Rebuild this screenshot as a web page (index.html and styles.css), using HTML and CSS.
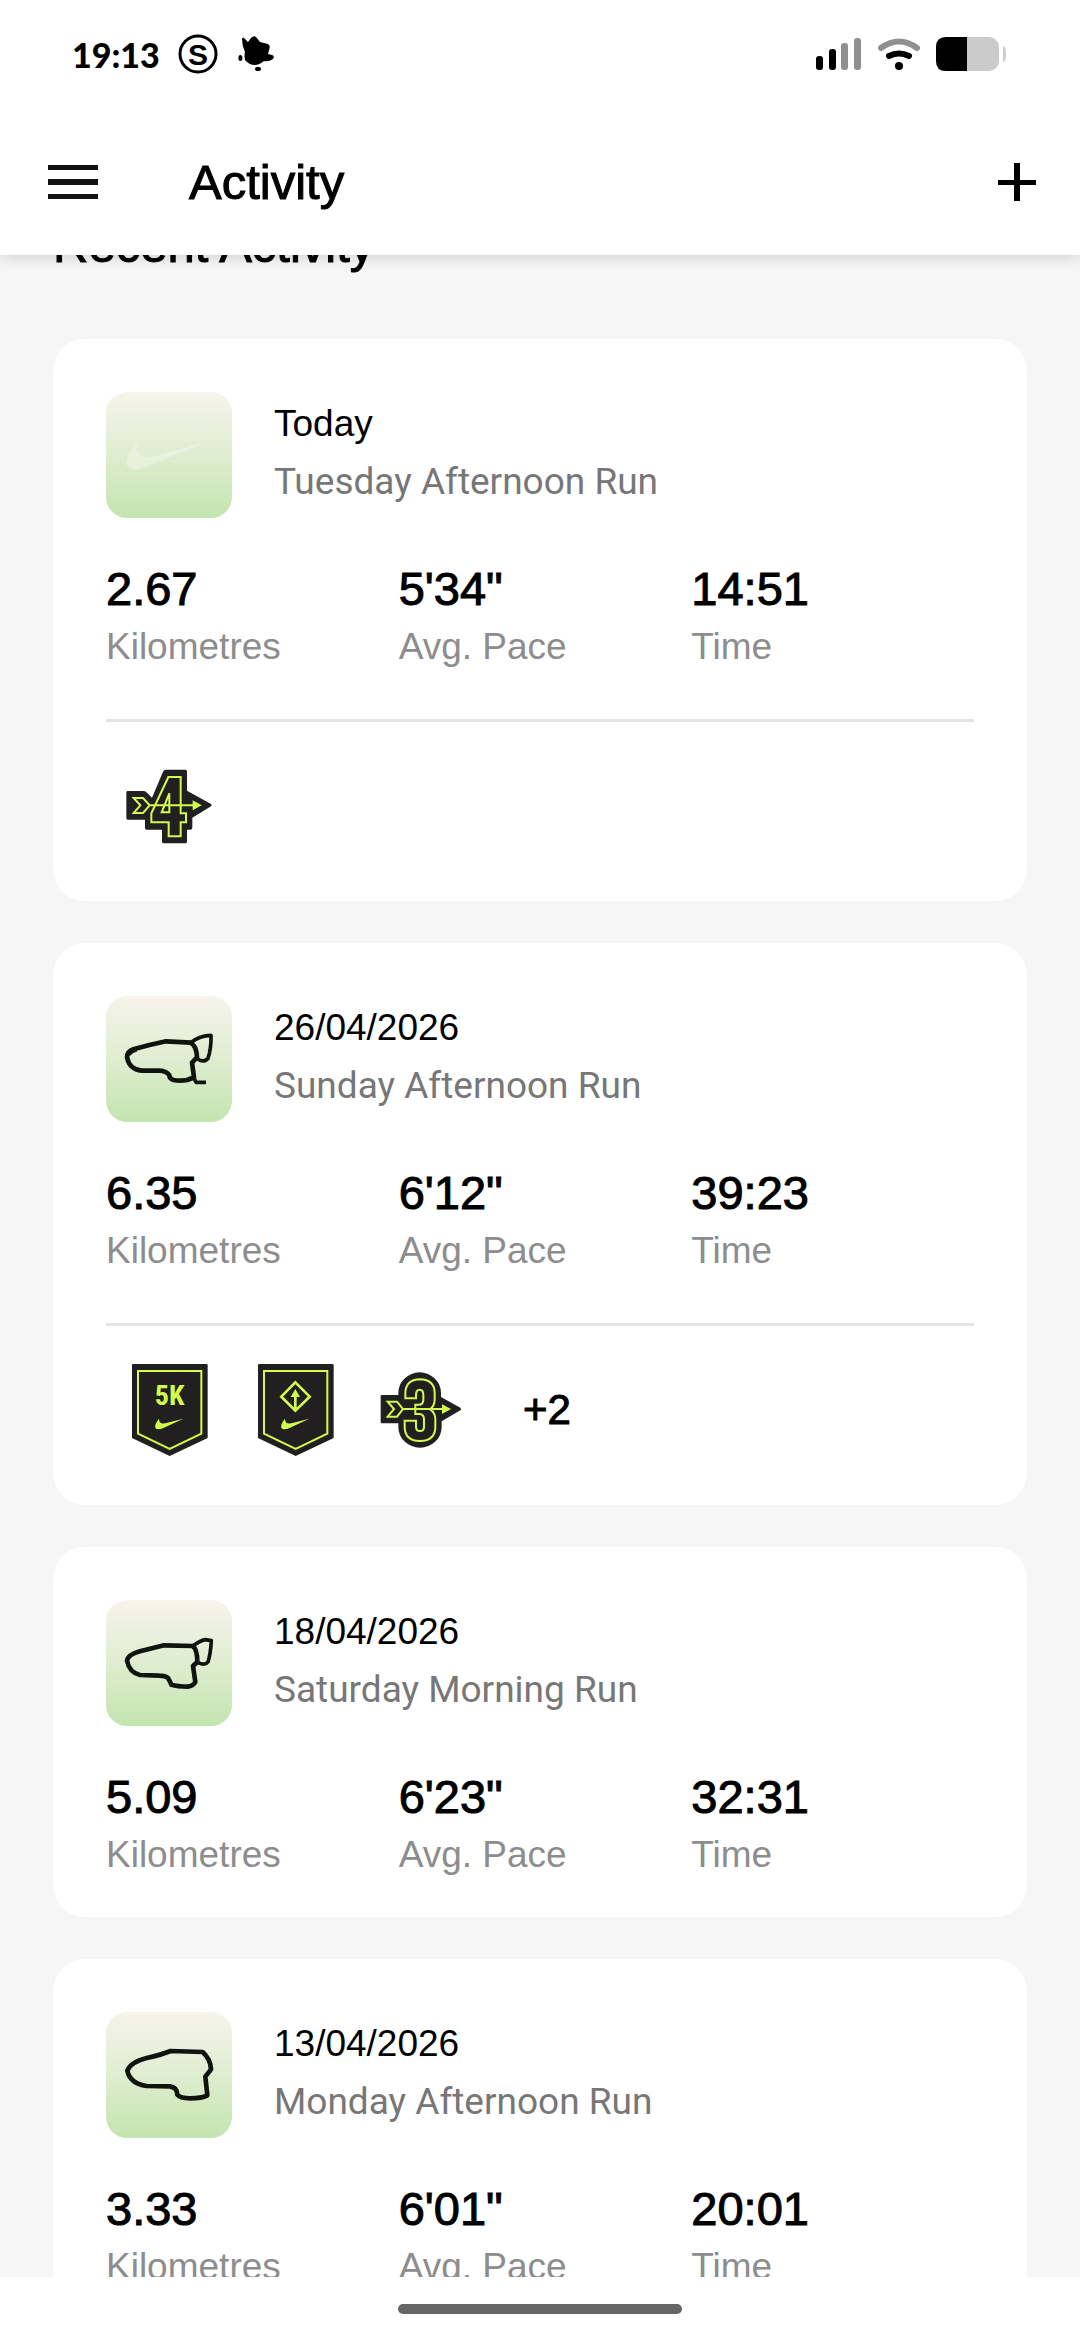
FILE: index.html
```html
<!DOCTYPE html>
<html lang="en">
  <head>
    <meta charset="UTF-8" />
    <meta name="viewport" content="width=device-width, initial-scale=1.0" />
    <title>Activity</title>
    <link rel="stylesheet" href="styles.css">
  </head>
  <body>
    <header class="header">
      <div class="status">
        <span class="clock">19:13</span>
        <svg class="status-s" viewBox="0 0 40 40">
          <circle cx="20" cy="20" r="18" fill="none" stroke="#000" stroke-width="3" />
          <text x="20" y="31" text-anchor="middle" class="s-letter">S</text>
        </svg>
        <svg class="splat" viewBox="0 0 36 36">
          <path d="M4 3q1-3 3 0l3 3 3-4q3-3 5-1l4 5 8 2q3 2 1 6l-1 4 4 1q3 1 1 4-4 3-9 2-5 4-9 4-6 0-10-5-1-5 0-8-3-6-3-13z" />
          <ellipse cx="2.4" cy="22" rx="2" ry="3" />
          <rect x="17" y="31" width="6" height="4" rx="2" />
        </svg>
        <div class="status-right">
          <svg width="46" height="34" viewBox="0 0 46 34">
            <rect x="0" y="19" width="7" height="14" rx="3" />
            <rect x="13" y="12" width="7" height="21" rx="3" />
            <rect x="25" y="6" width="7" height="27" rx="3" fill="#909090" />
            <rect x="38" y="1" width="7" height="32" rx="3" fill="#909090" />
          </svg>
          <svg width="44" height="34" viewBox="0 0 44 34" fill="none" stroke-linecap="round">
            <path d="M4 11Q22-2 40 11" stroke="#909090" stroke-width="6" />
            <path d="M12 19q10-5 20 0" stroke="#000" stroke-width="6" />
            <circle cx="22" cy="29" r="4" fill="#000" />
          </svg>
          <svg width="70" height="34" viewBox="0 0 70 34">
            <rect width="63" height="34" rx="10" fill="#cbcbcb" />
            <path d="M31 0H10Q0 0 0 10v14q0 10 10 10h21z" />
            <path d="M67 9q3 1 3 8t-3 8z" fill="#cbcbcb" />
          </svg>
        </div>
      </div>
      <div class="appbar">
        <button class="icon-button" aria-label="Menu">
          <svg width="50" height="34" viewBox="0 0 50 34" fill="#111">
            <rect width="50" height="5" />
            <rect y="14" width="50" height="6" />
            <rect y="29" width="50" height="5" />
          </svg>
        </button>
        <h1>Activity</h1>
        <button class="icon-button" aria-label="Add">
          <svg width="38" height="38" viewBox="0 0 38 38">
            <path d="M0 17h16V0h6v17h16v5H22v16h-6V22H0z" />
          </svg>
        </button>
      </div>
    </header>

    <main class="content">
      <h2>Recent Activity</h2>
      <div class="list">
        <article class="card">
          <div class="top">
            <svg class="thumb" viewBox="0 0 126 126">
              <path d="M32 50C22 61 18 70 22 75q5 5 17 0L102 50 45 65C34 67 29 61 32 50z" fill="#fff" opacity=".3" />
            </svg>
            <div class="title">
              <p class="date">Today</p>
              <p class="name">Tuesday Afternoon Run</p>
            </div>
          </div>
          <dl class="stats">
            <div><dd>2.67</dd><dt>Kilometres</dt></div>
            <div><dd>5'34"</dd><dt>Avg. Pace</dt></div>
            <div><dd>14:51</dd><dt>Time</dt></div>
          </dl>
          <div class="badges">
            <svg class="badge" viewBox="48 129 378 378">
              <path class="dark" d="M109 277q0-4 4-4h48q6 0 10 5l15 15 33-78q3-6 9-6h58q5 0 5 5v58l72 40q4 4 0 7l-56 34v29q0 7-5 7h-11v36q0 5-5 5h-64q-6 0-6-5v-36h-46q-5 0-5-5v-25h-52q-4 0-4-5z" />
              <path class="line" d="M235 231h37v109h16v27h-16v42h-36v-42h-52v-27zM238 280l-23 57h23zM131 294h28l20 22-20 23h-28l20-23zM179 316h130" />
              <path class="lime" d="M308 301l27 15-27 15z" />
            </svg>
          </div>
        </article>

        <article class="card">
          <div class="top">
            <svg class="thumb" viewBox="48 48 378 378">
              <path class="route" d="M228 184L302 188Q320 198 321 232L306 248 312 292Q285 306 250 300 238 296 238 286 230 273 208 272L155 272Q118 268 111 232 112 214 130 208 180 194 228 184z" />
              <path class="route-thin" d="M302 188Q330 166 363 166 364 205 354 235 342 250 322 236M312 294l6 13h30M116 224q10-12 24-15" />
            </svg>
            <div class="title">
              <p class="date">26/04/2026</p>
              <p class="name">Sunday Afternoon Run</p>
            </div>
          </div>
          <dl class="stats">
            <div><dd>6.35</dd><dt>Kilometres</dt></div>
            <div><dd>6'12"</dd><dt>Avg. Pace</dt></div>
            <div><dd>39:23</dd><dt>Time</dt></div>
          </dl>
          <div class="badges">
            <svg class="badge" viewBox="18 21 378 378">
              <path class="dark" d="M96 76q0-4 4-4h219q4 0 4 4v218l-114 54-113-54z" />
              <path class="line" d="M114 93h190v188l-95 46-95-46z" />
              <text x="209" y="195" text-anchor="middle" class="badge-text">5K</text>
              <path class="lime" d="M177 236q-14 17-11 27 5 9 26 0l58-27-54 14q-19 4-19-14z" />
            </svg>
            <svg class="badge" viewBox="396 21 378 378">
              <path class="dark" d="M474 76q0-4 4-4h219q4 0 4 4v218l-114 54-113-54z" />
              <path class="line" d="M492 93h190v188l-95 46-95-46z" />
              <path class="line thick" d="M586 127l43 43-43 42-42-42zM586 210v-42" />
              <path class="lime" d="M586 147l14 24h-28zM555 236q-14 17-11 27 5 9 26 0l58-27-54 14q-19 4-19-14z" />
            </svg>
            <svg class="badge" viewBox="84 21 378 378">
              <path class="dark" d="M152 169q0-4 4-4h49v-6a64 62 0 0 1 128 0v12l58 32q5 4 0 8l-56 33v17a65 62 0 0 1-130 0v-11h-49q-4 0-4-4z" />
              <path class="line" d="M226 175v-14q0-42 44-43 44 1 44 42v18q0 20-14 30 16 10 16 30v22q0 42-46 43-46-1-46-43v-18h34v18q0 13 12 13t12-13v-22q0-15-14-16h-12v-28h10q14 0 14-15v-14q0-16-11-16t-11 16v10zM173 185h28l18 22-18 23h-28l19-23zM219 207h119" />
              <path class="lime" d="M336 193l27 14-27 15z" />
            </svg>
            <span class="more">+2</span>
          </div>
        </article>

        <article class="card">
          <div class="top">
            <svg class="thumb" viewBox="48 60 378 378">
              <path class="route" d="M222 196L308 198Q322 208 322 246L309 258 316 306Q310 318 293 320 262 319 244 314 240 304 234 294 226 287 208 287L150 285Q118 278 111 242 114 224 150 214 190 204 222 196z" />
              <path class="route-thin" d="M308 198Q330 182 346 179L364 182Q362 220 354 246 345 258 324 248" />
            </svg>
            <div class="title">
              <p class="date">18/04/2026</p>
              <p class="name">Saturday Morning Run</p>
            </div>
          </div>
          <dl class="stats">
            <div><dd>5.09</dd><dt>Kilometres</dt></div>
            <div><dd>6'23"</dd><dt>Avg. Pace</dt></div>
            <div><dd>32:31</dd><dt>Time</dt></div>
          </dl>
        </article>

        <article class="card">
          <div class="top">
            <svg class="thumb" viewBox="48 66 378 378">
              <path class="route" d="M242 183L338 186Q362 208 363 238L346 260 352 316Q335 325 300 325 270 325 262 314 262 292 240 289L170 288Q120 280 112 242 122 216 170 204 215 194 242 183z" />
            </svg>
            <div class="title">
              <p class="date">13/04/2026</p>
              <p class="name">Monday Afternoon Run</p>
            </div>
          </div>
          <dl class="stats">
            <div><dd>3.33</dd><dt>Kilometres</dt></div>
            <div><dd>6'01"</dd><dt>Avg. Pace</dt></div>
            <div><dd>20:01</dd><dt>Time</dt></div>
          </dl>
        </article>
      </div>
    </main>

    <footer class="home">
      <div class="home-bar"></div>
    </footer>
  </body>
</html>
```
FILE: styles.css
```css
* {
  box-sizing: border-box;
}
body {
  margin: 0;
  height: 100vh;
  display: flex;
  flex-direction: column;
  overflow: hidden;
  background-color: #f6f6f6;
  color: #000;
  font-family: "Liberation Sans", Arial, sans-serif;
}
h1,
h2,
p,
dl,
dd {
  margin: 0;
}
svg {
  display: block;
  flex-shrink: 0;
}
.header {
  flex-shrink: 0;
  background-color: #fff;
  box-shadow: 0 2px 14px rgba(0, 0, 0, 0.16);
  z-index: 1;
}
.status {
  display: flex;
  align-items: center;
  height: 108px;
  padding: 0 74px 0 72px;
}
.clock {
  font-family: Lato, sans-serif;
  font-size: 34px;
  font-weight: 900;
}
.status-s {
  width: 40px;
  height: 40px;
  margin-left: 18px;
}
.s-letter {
  font-size: 30px;
  font-weight: bold;
}
.splat {
  width: 36px;
  height: 36px;
  margin-left: 20px;
}
.status-right {
  display: flex;
  gap: 15px;
  margin-left: auto;
}
.appbar {
  display: flex;
  align-items: center;
  height: 147px;
  padding: 0 44px 0 48px;
}
.icon-button {
  padding: 0;
  border: none;
  background: none;
  cursor: pointer;
}
h1,
h2,
dd {
  font-size: 49px;
  font-weight: normal;
  line-height: 56px;
  -webkit-text-stroke: 1px #000;
}
h1 {
  flex: 1;
  margin-left: 91px;
}
.content {
  flex: 1;
  min-height: 0;
  overflow: hidden;
  padding: 0 53px;
}
h2 {
  margin: -38px 0 66px;
}
.list {
  display: flex;
  flex-direction: column;
  gap: 42px;
}
.card {
  padding: 53px 53px 32px;
  border-radius: 32px;
  background-color: #fff;
}
.top {
  display: flex;
  gap: 42px;
}
.thumb {
  width: 126px;
  height: 126px;
  border-radius: 21px;
  background: linear-gradient(#f7f4ec, #dfedd0 50%, #c3e5ae);
}
.route,
.route-thin {
  fill: none;
  stroke: #10140e;
  stroke-width: 14;
  stroke-linejoin: round;
}
.route-thin {
  stroke-width: 11;
}
.title {
  padding-top: 3px;
  font-size: 37px;
  line-height: 58px;
}
.name {
  font-family: Roboto, sans-serif;
  color: #777;
}
.stats {
  display: grid;
  grid-template-columns: repeat(3, 1fr);
  gap: 10px;
  margin-top: 43px;
}
.stats div {
  display: flex;
  flex-direction: column;
}
dd {
  font-size: 47px;
}
dt {
  font-size: 37px;
  line-height: 60px;
  color: #8d8d8d;
}
.badges {
  display: flex;
  align-items: center;
  margin-top: 42px;
  padding-top: 21px;
  border-top: 3px solid #e5e5e5;
}
.badge {
  width: 126px;
  height: 126px;
}
.dark {
  fill: #221f20;
}
.line {
  fill: none;
  stroke: #d3fb4b;
  stroke-width: 6;
}
.thick {
  stroke-width: 8;
}
.lime,
.badge-text {
  fill: #d3fb4b;
}
.badge-text {
  font-family: "Roboto Condensed", Roboto, sans-serif;
  font-size: 84px;
  font-weight: bold;
}
.more {
  margin-left: 39px;
  font-size: 42px;
  -webkit-text-stroke: 1px #000;
}
.home {
  flex-shrink: 0;
  display: flex;
  justify-content: center;
  height: 63px;
  padding-top: 27px;
  background-color: #fff;
  z-index: 1;
}
.home-bar {
  width: 284px;
  height: 10px;
  border-radius: 5px;
  background-color: #666;
}
```
